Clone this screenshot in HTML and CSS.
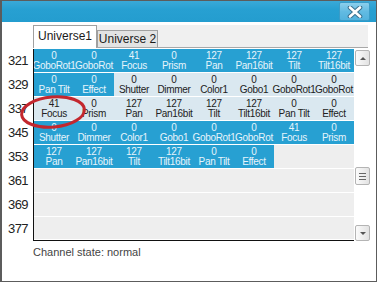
FILE: index.html
```html
<!DOCTYPE html>
<html>
<head>
    <title>DMX Channels</title>
    <link rel="stylesheet" href="styles.css">
</head>
<body>
    <div class="window">
        <div class="titlebar">
            <button class="close-btn" title="Close">
                <svg width="16" height="12" viewBox="0 0 16 12">
                    <path d="M3 1.5 L13 10.5 M13 1.5 L3 10.5" stroke="#3a6f8c" stroke-width="4.6" stroke-linecap="round"/>
                    <path d="M3 1.5 L13 10.5 M13 1.5 L3 10.5" stroke="#fff" stroke-width="2.6" stroke-linecap="round"/>
                </svg>
            </button>
        </div>

        <div class="content">
            <div class="tab-buttons">
                <div class="tab-button active">Universe1</div>
                <div class="tab-button">Universe 2</div>
            </div>

            <div class="view">
                <div class="rows" id="rows"></div>
                <div class="scrollbar">
                    <div class="sb-btn sb-up"><span class="arrow up"></span></div>
                    <div class="sb-thumb"><span></span><span></span><span></span></div>
                    <div class="sb-btn sb-down"><span class="arrow down"></span></div>
                </div>
                <svg class="highlight" width="70" height="36" viewBox="0 0 70 36">
                    <ellipse cx="34" cy="18" rx="31.5" ry="15" transform="rotate(-5 34 18)" fill="none" stroke="#c3272e" stroke-width="3"/>
                </svg>
            </div>

            <div class="status">Channel state: normal</div>
        </div>
    </div>

    <script>
        // start channel, then cells: [value, name, style]
        const rows = [
            [321, [['0','GoboRot1','on'],['0','GoboRot','on'],['41','Focus','on'],['0','Prism','on'],['127','Pan','on'],['127','Pan16bit','on'],['127','Tilt','on'],['127','Tilt16bit','on']]],
            [329, [['0','Pan Tilt','on'],['0','Effect','on'],['0','Shutter','off'],['0','Dimmer','off'],['0','Color1','off'],['0','Gobo1','off'],['0','GoboRot1','off'],['0','GoboRot','off']]],
            [337, [['41','Focus','off'],['0','Prism','off'],['127','Pan','off'],['127','Pan16bit','off'],['127','Tilt','off'],['127','Tilt16bit','off'],['0','Pan Tilt','off'],['0','Effect','off']]],
            [345, [['0','Shutter','on'],['0','Dimmer','on'],['0','Color1','on'],['0','Gobo1','on'],['0','GoboRot1','on'],['0','GoboRot','on'],['41','Focus','on'],['0','Prism','on']]],
            [353, [['127','Pan','on'],['127','Pan16bit','on'],['127','Tilt','on'],['127','Tilt16bit','on'],['0','Pan Tilt','on'],['0','Effect','on']]],
            [361, []],
            [369, []],
            [377, []]
        ];

        const rowsDiv = document.getElementById('rows');
        rows.forEach(([num, cells], i) => {
            const row = document.createElement('div');
            row.className = 'row' + (i === rows.length - 1 ? ' last' : '');
            let html = '<div class="num">' + num + '</div><div class="cells">';
            for (let c = 0; c < 8; c++) {
                const cell = cells[c];
                if (cell) {
                    html += '<div class="cell ' + cell[2] + '"><span>' + cell[0] + '</span><span>' + cell[1] + '</span></div>';
                } else {
                    html += '<div class="cell empty"></div>';
                }
            }
            html += '</div>';
            row.innerHTML = html;
            rowsDiv.appendChild(row);
        });
    </script>
</body>
</html>
```

FILE: styles.css
```css
body {
    margin: 0;
    font-family: "Liberation Sans", Arial, sans-serif;
    background: #fff;
}
.window {
    width: 377px;
    height: 282px;
    box-sizing: border-box;
    border: 1px solid #5c5c5c;
    border-left-width: 2px;
    background: #fff;
}
.titlebar {
    height: 21px;
    background: linear-gradient(#3aa9d8, #27a0d2 40%, #249dcf);
    display: flex;
    justify-content: flex-end;
    padding-right: 6px;
}
.close-btn {
    width: 31px;
    height: 19px;
    margin-top: 1px;
    padding: 0;
    border: 1px solid #3a9cc8;
    border-radius: 2px;
    background: linear-gradient(#8ccfec, #62bbe2 50%, #52b2dd);
    display: flex;
    align-items: center;
    justify-content: center;
}
.content {
    padding-top: 3px;
}
.tab-buttons {
    margin-left: 31px;
    width: 335px;
    height: 22px;
    background: #f0f0f0;
    border-bottom: 1px solid #a8a8a8;
    display: flex;
    align-items: flex-end;
}
.tab-button {
    box-sizing: border-box;
    font-size: 12px;
    color: #1a1a1a;
    text-align: center;
    border: 1px solid #a0a0a0;
    border-bottom: none;
    background: #e3e3e3;
    width: 61px;
    height: 17px;
    line-height: 16px;
}
.tab-button.active {
    background: #fff;
    width: 64px;
    height: 23px;
    line-height: 20px;
    margin-bottom: -1px;
}
.view {
    position: relative;
    display: flex;
    margin-top: 1px;
}
.rows {
    width: 352px;
}
.row {
    display: flex;
    height: 24px;
}
.num {
    width: 31px;
    box-sizing: border-box;
    padding-right: 5px;
    text-align: right;
    font-size: 13px;
    letter-spacing: -0.6px;
    color: #222;
    line-height: 24px;
}
.cells {
    display: flex;
    border-left: 1px solid #111;
    overflow: hidden;
    width: 320px;
}
.row.last .cells {
    border-bottom: 1px solid #111;
}
.cell {
    width: 40px;
    flex: none;
    box-sizing: border-box;
    border-bottom: 1px solid #fff;
    text-align: center;
    font-size: 10px;
    letter-spacing: -0.3px;
    line-height: 10px;
    padding-top: 2px;
    white-space: nowrap;
    display: flex;
    flex-direction: column;
    align-items: center;
}
.cell span {
    position: relative;
}
.cell.on {
    background: #27a0d2;
    color: #e6f4fb;
}
.cell.off {
    background: #dae8f0;
    color: #222;
}
.cell.empty {
    background: #eeeeee;
}
.scrollbar {
    width: 15px;
    margin-left: 1px;
    display: flex;
    flex-direction: column;
}
.sb-btn,
.sb-thumb {
    box-sizing: border-box;
    height: 16px;
    border: 1px solid #b4b4b4;
    border-radius: 2px;
    background: linear-gradient(to right, #fbfbfb, #e2e2e2);
    display: flex;
    align-items: center;
    justify-content: center;
}
.sb-up {
    margin-top: 1px;
}
.sb-thumb {
    margin-top: 101px;
    height: 18px;
    flex-direction: column;
    gap: 2px;
}
.sb-thumb span {
    display: block;
    width: 7px;
    height: 1px;
    background: #666;
}
.sb-down {
    margin-top: auto;
}
.arrow {
    width: 0;
    height: 0;
    border-left: 3px solid transparent;
    border-right: 3px solid transparent;
}
.arrow.up {
    border-bottom: 3px solid #555;
}
.arrow.down {
    border-top: 3px solid #555;
}
.highlight {
    position: absolute;
    left: 17px;
    top: 45px;
}
.status {
    margin: 5px 0 0 31px;
    font-size: 11px;
    color: #444;
}
```
